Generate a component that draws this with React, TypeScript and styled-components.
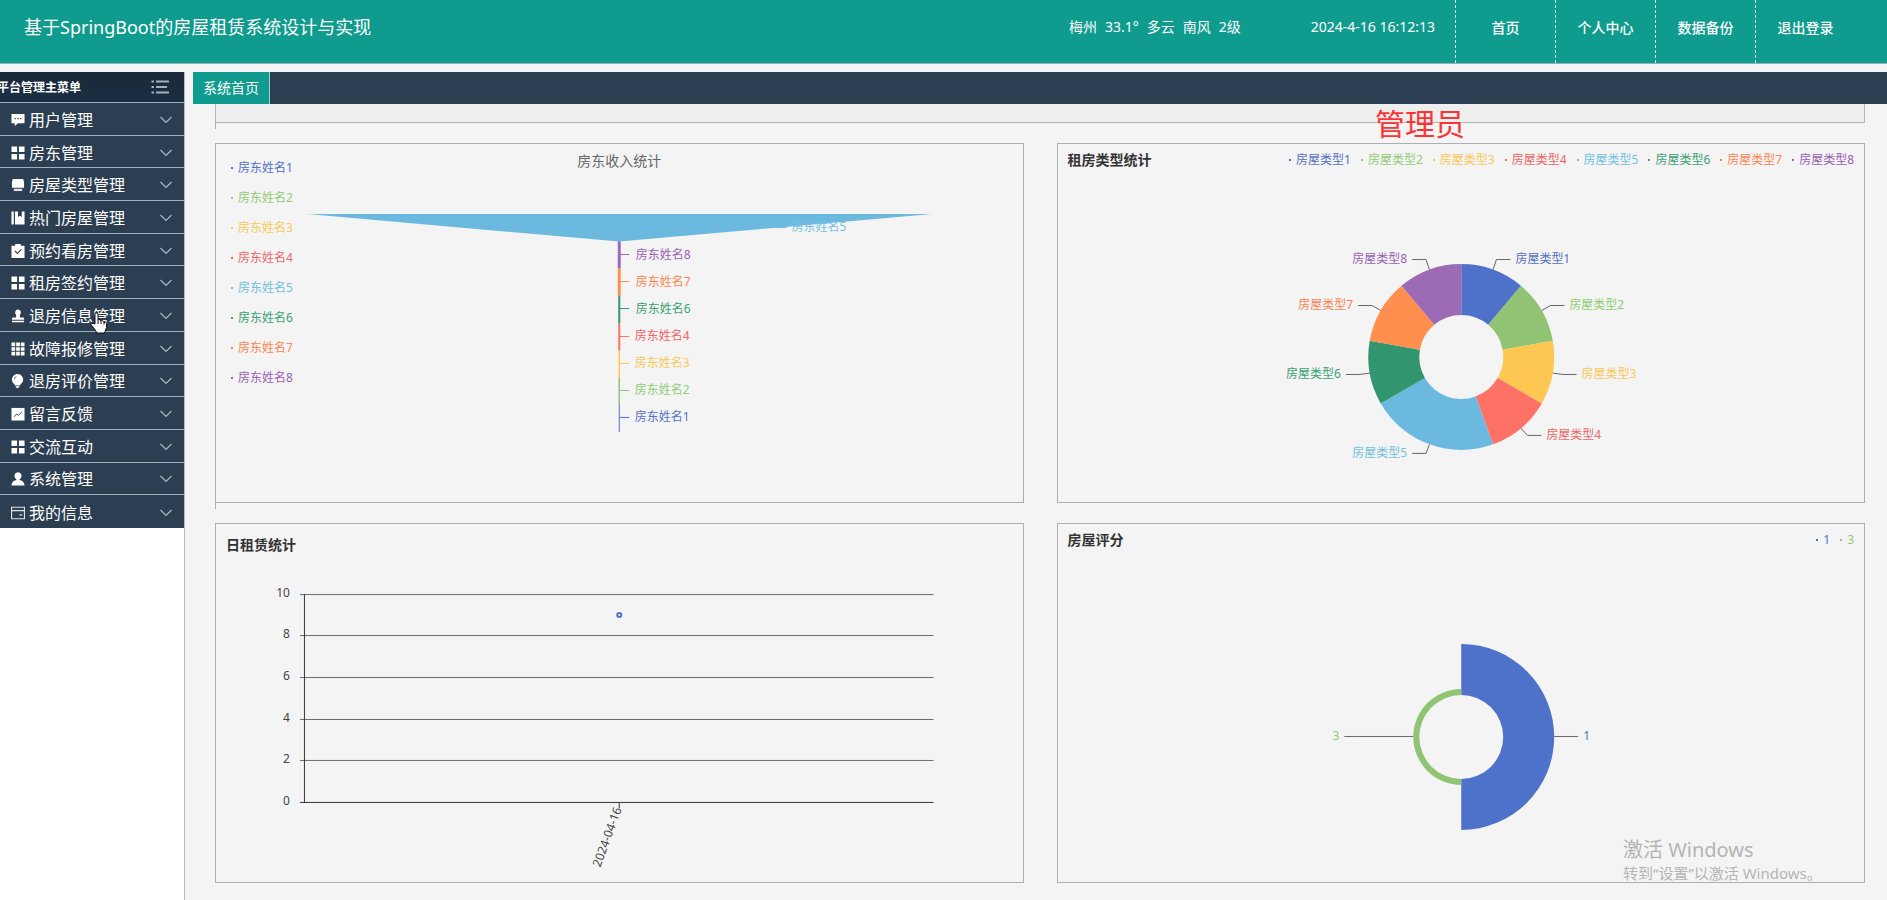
import React from "react";
import styled, { createGlobalStyle } from "styled-components";

const GlobalStyle = createGlobalStyle`
  *, *::before, *::after { box-sizing: border-box; }
  body {
    margin: 0;
    background: #f4f4f4;
    font-family: "Noto Sans", "Noto Sans CJK SC", sans-serif;
    font-size: 14px;
    color: #333;
  }
  ul { list-style: none; margin: 0; padding: 0; }
  h1, h2, p { margin: 0; }
`;

const palette = ["#4e71c9", "#90c474", "#fec751", "#fd7264", "#6cb9e0", "#319670", "#ff8f4f", "#9d6ab5"];
const labelInk = ["#5470c6", "#91cc75", "#fac858", "#ee6666", "#73c0de", "#3ba272", "#fc8452", "#9a60b4"];

const Page = styled.div`
  position: relative;
  min-height: 100vh;
  display: flex;
  flex-direction: column;
  overflow: hidden;
`;

const Header = styled.header`
  display: flex;
  align-items: stretch;
  height: 64px;
  padding: 0 32px 0 24px;
  background: #0f9b8e;
  border-bottom: 1px solid #8fb5b0;
  color: #fff;
  line-height: 54px;
`;

const SiteTitle = styled.h1`
  flex: 1;
  font-size: 18px;
  font-weight: 400;
  line-height: 54px;
  white-space: nowrap;
`;

const Weather = styled.div`
  display: flex;
  gap: 8px;
  margin-right: 70px;
  white-space: nowrap;
`;

const Clock = styled.time`
  margin-right: 20px;
  white-space: nowrap;
`;

const TopNav = styled.nav`
  display: flex;
`;

const TopLink = styled.a`
  width: 100px;
  border-left: 1px dashed #d8f0ee;
  color: #fff;
  font-weight: 500;
  line-height: 56px;
  text-align: center;
  text-decoration: none;
`;

const Body = styled.div`
  flex: 1;
  display: flex;
  margin-top: 8px;
`;

const Sidebar = styled.aside`
  flex: none;
  width: 185px;
  background: #fff;
  border-right: 1px solid #b9bcbf;
`;

const SidebarHead = styled.div`
  display: flex;
  align-items: center;
  justify-content: space-between;
  height: 31px;
  padding-right: 15px;
  background: linear-gradient(#1a293b, #1b2e42);
  border-bottom: 1px solid #9db2bd;
  color: #fff;
  overflow: hidden;
`;

const SidebarTitle = styled.h2`
  margin-left: -3px;
  padding-top: 2px;
  font-size: 12px;
  font-weight: 700;
  line-height: 28px;
`;

const Menu = styled.ul`
  display: grid;
  grid-auto-rows: 1fr;
  height: 425px;
`;

const MenuItem = styled.li`
  border-bottom: 1px solid #9db2bd;
  &:last-child { border-bottom: 0; }
`;

const MenuButton = styled.button`
  display: flex;
  align-items: center;
  width: 100%;
  height: 100%;
  padding: 2px 12px 0 11px;
  border: 0;
  background: #2c3e52;
  color: #fff;
  font: inherit;
  font-size: 16px;
  line-height: 24px;
  cursor: pointer;
`;

const MenuText = styled.span`
  flex: 1;
  margin-left: 4px;
  text-align: left;
`;

const Main = styled.main`
  flex: 1;
  min-width: 0;
  margin-left: 8px;
`;

const TabBar = styled.div`
  display: flex;
  height: 32px;
  background: #2c3e52;
`;

const Tab = styled.button`
  width: 77px;
  padding: 0;
  border: 0;
  border-right: 1px solid #a5cfd0;
  background: #0f9b8e;
  color: #fff;
  font: inherit;
  line-height: 32px;
`;

const Board = styled.div`
  padding: 0 22px 17px;
`;

const Row = styled.div<{ $tail?: boolean }>`
  display: grid;
  grid-auto-flow: column;
  grid-auto-columns: minmax(0, 1fr);
  gap: 33px;
  margin-bottom: ${(p) => (p.$tail ? 14 : 0)}px;
  padding-bottom: ${(p) => (p.$tail ? 6 : 0)}px;
  background: ${(p) => (p.$tail ? "linear-gradient(#a9afb2, #a9afb2) left / 1px 100% no-repeat" : "none")};
`;

const Strip = styled.div`
  height: 19px;
  border: 1px solid #b1b4b5;
  border-top: 0;
  background: #eee;
`;

const Card = styled.section`
  display: grid;
  min-height: 360px;
  border: 1px solid #abafb1;
  background: #f4f4f4;
  & > * { grid-area: 1 / 1; }
`;

const CardHead = styled.div`
  display: flex;
  align-items: center;
  justify-content: space-between;
  align-self: start;
  height: 32px;
  padding: 0 10px;
`;

const CardTitle = styled.h2`
  font-size: 14px;
  font-weight: 700;
  line-height: 32px;
  color: #333;
`;

const LineTitle = styled(CardTitle)`
  padding: 5px 10px 0;
`;

const CenterTitle = styled(CardTitle)`
  padding-top: 1px;
  font-weight: 400;
  color: #666;
  text-align: center;
`;

const Legend = styled.ul<{ $column?: boolean }>`
  display: flex;
  flex-direction: ${(p) => (p.$column ? "column" : "row")};
  gap: ${(p) => (p.$column ? 0 : 10)}px;
  padding: ${(p) => (p.$column ? "9px 15px" : "0")};
  font-size: 12px;
  line-height: 30px;
  white-space: nowrap;
`;

const LegendItem = styled.li<{ $color: string }>`
  display: flex;
  align-items: center;
  color: ${(p) => p.$color};
  &::before {
    content: "";
    width: 2px;
    height: 2px;
    margin-right: 5px;
    background: currentColor;
  }
`;

const Chart = styled.svg`
  display: block;
  width: 100%;
  height: 100%;
  font-size: 12px;
`;

const RoleMark = styled.div`
  position: absolute;
  top: 104px;
  right: 422px;
  font-size: 30px;
  line-height: 40px;
  color: #fc3434;
`;

const ActivateMark = styled.div`
  position: absolute;
  right: 66px;
  bottom: 16px;
  width: 198px;
  color: #b4b4b4;
  font-size: 15px;
  line-height: 22px;
  white-space: nowrap;
  pointer-events: none;
`;

const ActivateTitle = styled.p`
  font-size: 20px;
  line-height: 25px;
`;

const Pointer = styled.svg`
  position: absolute;
  left: 90px;
  top: 312px;
  pointer-events: none;
`;

const icons: Record<string, React.ReactNode> = {
  chat: (
    <>
      <path d="M.5 1h14v10H7.500L4 14v-3H.5z" />
      <path d="M3.800 5.300h1.400v1.400H3.800zM6.800 5.300h1.400v1.400H6.800zM9.800 5.300h1.400v1.400H9.800z" fill="#2c3e52" />
    </>
  ),
  grid: <path d="M.5.500h6v6h-6zM8.500.500h6v6h-6zM.5 8.500h6v6h-6zM8.500 8.500h6v6h-6z" />,
  printer: (
    <>
      <path d="M2 1h11l1 3v6.500H1V4z" />
      <path d="M3 11.500h9v2.500H3z" fill="#dfe3e6" />
    </>
  ),
  book: <path d="M.5.500H3v14H.5zM4.300.500H7.500v6l2-1.500 2 1.500v-6h3v14H4.300z" />,
  clip: (
    <>
      <path d="M.5 2H4.500V0h6v2h4v13H.5z" />
      <path d="M4.300 7.500l2.500 2.700 4.300-4.500" fill="none" stroke="#2c3e52" strokeWidth="1.200" />
    </>
  ),
  stamp: <path d="M7.500.500a3.300 3.300 0 0 1 2 5.800V9h4l.7 2.500H.8L1.500 9h4V6.300a3.300 3.300 0 0 1 2-5.800zM1 12.700h13v1.500H1z" />,
  nine: <path d="M.5.500h4v4h-4zM5.500.500h4v4h-4zM10.500.500h4v4h-4zM.5 5.500h4v4h-4zM5.500 5.500h4v4h-4zM10.500 5.500h4v4h-4zM.5 10.500h4v4h-4zM5.500 10.500h4v4h-4zM10.500 10.500h4v4h-4z" />,
  bulb: (
    <>
      <path d="M7 0a6 6 0 0 1 3.700 10.700c-.8.600-1 1-1 1.600H4.300c0-.6-.2-1-1-1.600A6 6 0 0 1 7 0zM4.700 13h4.600L8 15H6z" />
      <path d="M3.500 5.500a3.300 3.300 0 0 1 2.300-2.700" fill="none" stroke="#2c3e52" strokeWidth=".8" />
    </>
  ),
  trend: (
    <>
      <path d="M.5 1h14v13.500H.5z" />
      <path d="M3.300 10.500L6 7.500l2 1.500 3.700-4" fill="none" stroke="#2c3e52" />
    </>
  ),
  user: <path d="M7.500.300a3.900 3.900 0 0 1 2.200 7.100l-.9 1.100c3.400.3 5.300 2.200 5.800 6H.4c.5-3.800 2.400-5.700 5.800-6l-.9-1.100A3.900 3.900 0 0 1 7.500.300z" />,
  card: (
    <path
      d="M.6 1.300h13.800v12.400H.6zM.6 5h13.800M9 9.500h3"
      fill="none"
      stroke="#dfe3e6"
      strokeWidth="1.200"
    />
  ),
};

const menu: [string, string][] = [
  ["chat", "用户管理"],
  ["grid", "房东管理"],
  ["printer", "房屋类型管理"],
  ["book", "热门房屋管理"],
  ["clip", "预约看房管理"],
  ["grid", "租房签约管理"],
  ["stamp", "退房信息管理"],
  ["nine", "故障报修管理"],
  ["bulb", "退房评价管理"],
  ["trend", "留言反馈"],
  ["grid", "交流互动"],
  ["user", "系统管理"],
  ["card", "我的信息"],
];

const Icon = ({ name }: { name: string }) => (
  <svg width="14" height="14" viewBox="0 0 15 15" fill="#fff" aria-hidden="true">
    {icons[name]}
  </svg>
);

const Chevron = () => (
  <svg width="12" height="8" viewBox="0 0 12 8" fill="none" stroke="#a9b8c3" strokeWidth="1.200" aria-hidden="true">
    <path d="M.500 1L6 6.500 11.500 1" />
  </svg>
);

const LegendList = ({ names, column }: { names: string[]; column?: boolean }) => (
  <Legend $column={column}>
    {names.map((name, i) => (
      <LegendItem key={name} $color={labelInk[i]}>
        {name}
      </LegendItem>
    ))}
  </Legend>
);

const CX = 403.5;

const Funnel = () => {
  const step = 27.25;
  const order = [8, 7, 6, 4, 3, 2, 1];
  const widths = [3, 3, 2, 2, 1.5, 1.5, 1];
  return (
    <Chart viewBox="0 0 807 358" role="img" aria-label="房东收入统计">
      <path d={`M91.500 70H716.500L${CX} 97.500z`} fill={palette[4]} />
      <path d="M560 83.500H571" stroke={palette[4]} />
      <text x="576" y="87" fill={labelInk[4]}>房东姓名5</text>
      {order.map((n, i) => {
        const top = 97.25 + i * step;
        const mid = Math.round(top + step / 2) - 0.5;
        return (
          <g key={n}>
            <rect x={CX - widths[i] / 2} y={top} width={widths[i]} height={step} fill={palette[n - 1]} />
            <path d={`M${CX} ${mid}h10`} stroke={palette[n - 1]} />
            <text x={i < 3 ? 420 : 419} y={mid + 4} fill={labelInk[n - 1]}>{`房东姓名${n}`}</text>
          </g>
        );
      })}
    </Chart>
  );
};

const CY = 213;
const polar = (deg: number, r: number) => {
  const a = (deg * Math.PI) / 180;
  return [CX + r * Math.sin(a), CY - r * Math.cos(a)];
};

const sector = (from: number, to: number, outer: number, inner: number) => {
  const [x1, y1] = polar(from, outer);
  const [x2, y2] = polar(to, outer);
  const [x3, y3] = polar(to, inner);
  const [x4, y4] = polar(from, inner);
  return `M${x1} ${y1}A${outer} ${outer} 0 0 1 ${x2} ${y2}L${x3} ${y3}A${inner} ${inner} 0 0 0 ${x4} ${y4}z`;
};

type Slice = { name: string; from: number; to: number; outer: number };

const Ring = ({ label, slices }: { label: string; slices: Slice[] }) => (
  <Chart viewBox="0 0 807 358" role="img" aria-label={label}>
    {slices.map((s, i) => {
      const mid = (s.from + s.to) / 2;
      const dir = mid < 180 ? 1 : -1;
      const [ax, ay] = polar(mid, s.outer);
      const [bx, by] = polar(mid, 103);
      const lineY = Math.round(by) - 0.5;
      return (
        <g key={s.name}>
          <path d={sector(s.from, s.to, s.outer, 42)} fill={palette[i]} />
          <path d={`M${ax} ${mid % 90 === 0 ? lineY : ay}L${bx} ${lineY}h${dir * 14}`} fill="none" stroke="#666" />
          <text x={bx + dir * 19} y={lineY + 3.5} fill={labelInk[i]} textAnchor={dir > 0 ? "start" : "end"}>
            {s.name}
          </text>
        </g>
      );
    })}
  </Chart>
);

const ticks: [number, number][] = [
  [10, 70.5],
  [8, 111.5],
  [6, 153.5],
  [4, 195.5],
  [2, 236.5],
  [0, 278.5],
];

const DailyChart = () => (
  <Chart viewBox="0 0 807 358" role="img" aria-label="日租赁统计">
    {ticks.map(([value, y]) => (
      <g key={value}>
        <path d={`M84 ${y}H718`} stroke={value === 0 ? "#333" : "#6a6b6d"} />
        <text x="74" y={y + 2.5} textAnchor="end" fill="#444">{value}</text>
      </g>
    ))}
    <path d="M88.500 70V279M403.500 279v5" stroke="#333" />
    <circle cx="403.5" cy="91" r="2" fill="#fff" stroke={palette[0]} strokeWidth="2" />
    <text transform="translate(406 285) rotate(-70)" textAnchor="end" fill="#444">2024-04-16</text>
  </Chart>
);

const kinds = [1, 2, 3, 4, 5, 6, 7, 8];
const bounds = [0, 40, 80, 120, 160, 240, 280, 320, 360];
const typeSlices = kinds.map((n, i) => ({ name: `房屋类型${n}`, from: bounds[i], to: bounds[i + 1], outer: 93 }));
const scoreSlices = [
  { name: "1", from: 0, to: 180, outer: 93 },
  { name: "3", from: 180, to: 360, outer: 48 },
];

export default function App() {
  return (
    <Page>
      <GlobalStyle />
      <Header>
        <SiteTitle>基于SpringBoot的房屋租赁系统设计与实现</SiteTitle>
        <Weather>
          {["梅州", "33.1°", "多云", "南风", "2级"].map((part) => (
            <span key={part}>{part}</span>
          ))}
        </Weather>
        <Clock>2024-4-16 16:12:13</Clock>
        <TopNav>
          {["首页", "个人中心", "数据备份", "退出登录"].map((text) => (
            <TopLink href="#" key={text}>{text}</TopLink>
          ))}
        </TopNav>
      </Header>
      <Body>
        <Sidebar>
          <SidebarHead>
            <SidebarTitle>平台管理主菜单</SidebarTitle>
            <svg width="18" height="14" viewBox="0 0 18 14" stroke="#a3b0bb" strokeWidth="1.800" aria-hidden="true">
              <path d="M5 1.500h13M5 7h11M5 12.500h13M.500 1.500H3M.500 7H3M.500 12.500H3" />
            </svg>
          </SidebarHead>
          <Menu>
            {menu.map(([icon, text]) => (
              <MenuItem key={text}>
                <MenuButton type="button">
                  <Icon name={icon} />
                  <MenuText>{text}</MenuText>
                  <Chevron />
                </MenuButton>
              </MenuItem>
            ))}
          </Menu>
        </Sidebar>
        <Main>
          <TabBar>
            <Tab type="button">系统首页</Tab>
          </TabBar>
          <Board>
            <Row $tail>
              <Strip />
            </Row>
            <Row $tail>
              <Card>
                <CenterTitle>房东收入统计</CenterTitle>
                <LegendList column names={kinds.map((n) => `房东姓名${n}`)} />
                <Funnel />
              </Card>
              <Card>
                <CardHead>
                  <CardTitle>租房类型统计</CardTitle>
                  <LegendList names={kinds.map((n) => `房屋类型${n}`)} />
                </CardHead>
                <Ring label="租房类型统计" slices={typeSlices} />
              </Card>
            </Row>
            <Row>
              <Card>
                <LineTitle>日租赁统计</LineTitle>
                <DailyChart />
              </Card>
              <Card>
                <CardHead>
                  <CardTitle>房屋评分</CardTitle>
                  <LegendList names={["1", "3"]} />
                </CardHead>
                <Ring label="房屋评分" slices={scoreSlices} />
              </Card>
            </Row>
          </Board>
        </Main>
      </Body>
      <RoleMark>管理员</RoleMark>
      <ActivateMark>
        <ActivateTitle>激活 Windows</ActivateTitle>
        <p>转到“设置”以激活 Windows。</p>
      </ActivateMark>
      <Pointer width="18" height="22" viewBox="0 0 18 22" aria-hidden="true">
        <path
          d="M5 12V2.500a1.500 1.500 0 0 1 3 0V8l1-.5 1.500.5.500 1 1.500-.5 1.200 1 .3.800 1.500-.3 1 1.500v4l-2 5.500H7L4.500 17 1 12.500l1-1.200 1.500.2z"
          fill="#fff"
          stroke="#111"
        />
        <path d="M8 8v4M11 9v3M14 10v2.500" stroke="#111" />
      </Pointer>
    </Page>
  );
}
